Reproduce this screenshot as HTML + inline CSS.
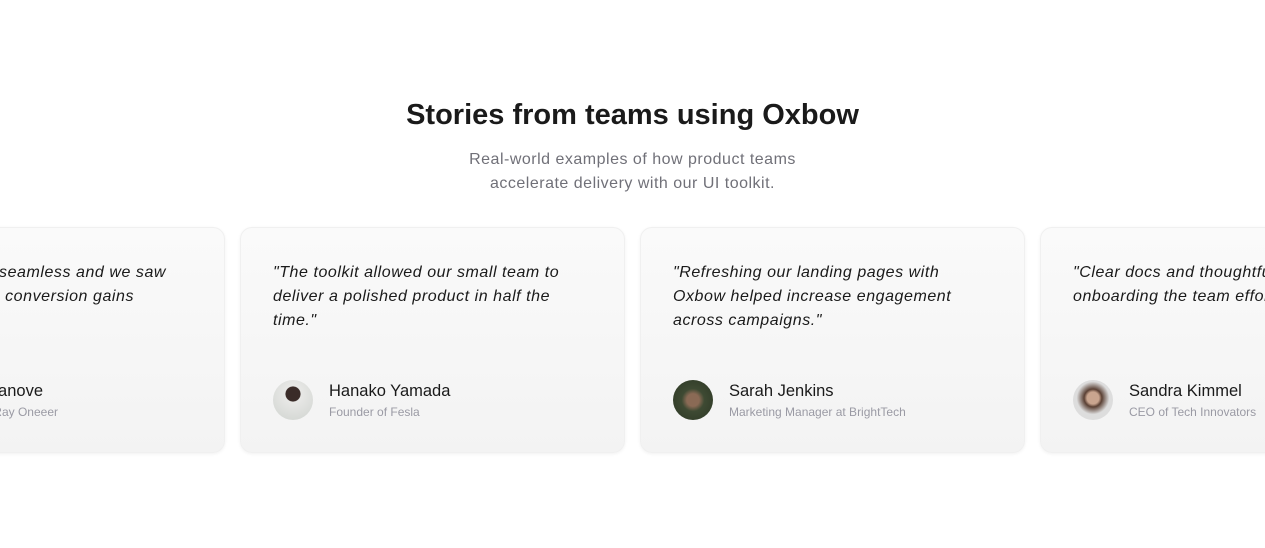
<!DOCTYPE html>
<html><head><style>
*{margin:0;padding:0;box-sizing:border-box}
html,body{width:1265px;height:548px;overflow:hidden}
body{background:#fff;position:relative;font-family:"Liberation Sans",sans-serif}
.wrap{position:absolute;left:0;top:0;width:1265px;height:548px;overflow:hidden}
h1{position:absolute;top:99px;left:0;width:1265px;text-align:center;font-size:29px;font-weight:700;color:#1a1a1a}
.sub{position:absolute;top:148px;left:0;width:1265px;text-align:center;font-size:16px;line-height:24px;color:#707078;letter-spacing:.5px}
.card{position:absolute;top:227px;width:385px;height:226px;border-radius:12px;background:linear-gradient(#fafafa,#f3f3f3);box-shadow:0 1px 3px rgba(0,0,0,0.06);border:1px solid #f0f0f0}
.q{position:absolute;left:32px;top:33px;width:320px;font-size:16px;line-height:24px;font-style:italic;color:#1a1a1a;letter-spacing:.55px;white-space:nowrap}
.av{position:absolute;left:32px;top:152px;width:40px;height:40px;border-radius:50%}
.n{position:absolute;left:88px;top:154px;font-size:16.5px;color:#1a1a1a;white-space:nowrap}
.r{position:absolute;left:88px;top:177px;font-size:12px;color:#9a9aa4;white-space:nowrap}
.rt{position:absolute;font-size:16px;line-height:24px;font-style:italic;color:#1a1a1a;letter-spacing:.55px;white-space:nowrap;text-align:right}
</style></head><body><div class="wrap">
<h1>Stories from teams using Oxbow</h1>
<div class="sub">Real-world examples of how product teams<br>accelerate delivery with our UI toolkit.</div>
<div class="card" style="left:-160px">
<div class="rt" style="right:58px;top:33px">"The integration was seamless and we saw</div>
<div class="rt" style="right:90px;top:57px">"Our team noticed improved conversion gains</div>
<div class="av" style="background:#bbb"></div>
<div class="n" style="right:181px;left:auto">Alex Villanove</div>
<div class="r" style="right:166px;left:auto">Marketing at Ray Oneeer</div></div>
<div class="card" style="left:240px"><div class="q">"The toolkit allowed our small team to<br>deliver a polished product in half the<br>time."</div><div class="av" style="background:radial-gradient(circle at 50% 35%,#3a2c28 0 22%,#e8e8e6 24%,#cfd3cf)"></div><div class="n">Hanako Yamada</div><div class="r">Founder of Fesla</div></div>
<div class="card" style="left:640px"><div class="q">"Refreshing our landing pages with<br>Oxbow helped increase engagement<br>across campaigns."</div><div class="av" style="background:radial-gradient(circle at 50% 50%,#8a6a55 0 22%,#3e4a33 40%,#2c3624)"></div><div class="n">Sarah Jenkins</div><div class="r">Marketing Manager at BrightTech</div></div>
<div class="card" style="left:1040px"><div class="q">"Clear docs and thoughtful components<br>onboarding the team effortless."</div><div class="av" style="background:radial-gradient(circle at 50% 45%,#c9a58f 0 20%,#5a4034 30%,#ddd 55%)"></div><div class="n">Sandra Kimmel</div><div class="r">CEO of Tech Innovators</div></div>
</div></body></html>
